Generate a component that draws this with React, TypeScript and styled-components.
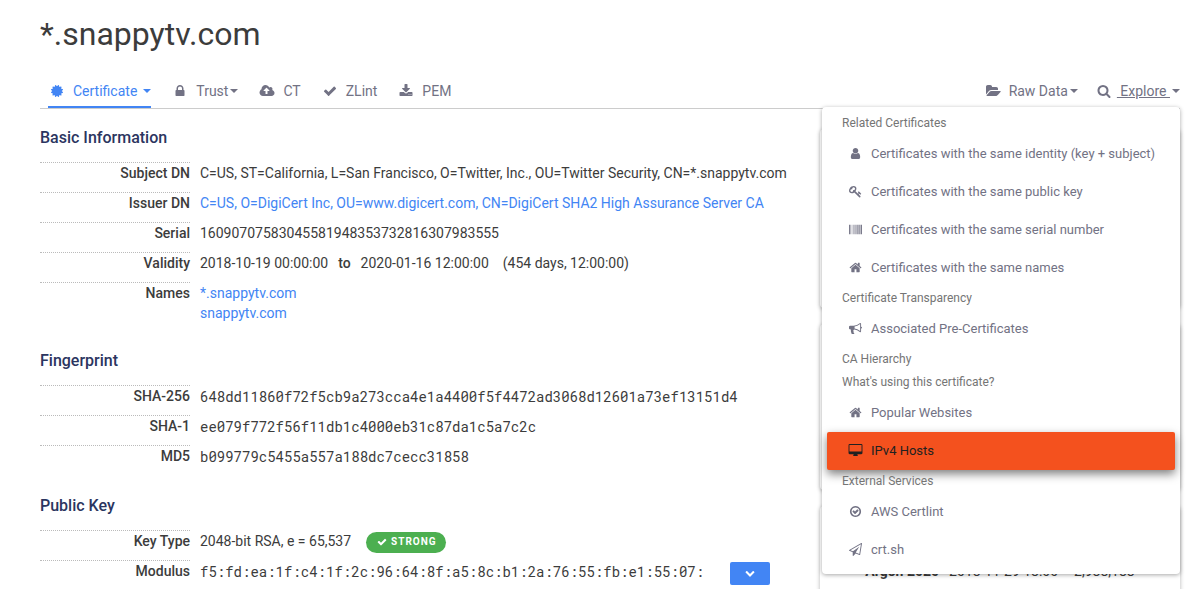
import React from "react";
import styled, { createGlobalStyle, css } from "styled-components";

const GlobalStyle = createGlobalStyle`
  *, *::before, *::after { box-sizing: border-box; }
  body {
    margin: 0;
    background: #fff;
    color: #3c3c3c;
    font-family: Roboto, "Liberation Sans", sans-serif;
    font-size: 14px;
    line-height: 20px;
  }
`;

const blue = "#4285f4";
const muted = "#727284";

/* ---------- icons ---------- */

const icons = {
  certificate:
    "M1504 896l138 135q30 28 20 70-12 41-52 51l-188 48 53 186q12 41-19 70-29 31-70 19l-186-53-48 188q-10 40-51 52-12 2-19 2-31 0-51-22l-135-138-135 138q-28 30-70 20-41-11-51-52l-48-188-186 53q-41 12-70-19-31-29-19-70l53-186-188-48q-40-10-52-51-10-42 20-70l138-135-138-135q-30-28-20-70 12-41 52-51l188-48-53-186q-12-41 19-70 29-31 70-19l186 53 48-188q10-41 51-51 41-12 70 19l135 139 135-139q29-30 70-19 41 10 51 51l48 188 186-53q41-12 70 19 31 29 19 70l-53 186 188 48q40 10 52 51 10 42-20 70z",
  lock: "M640 768h512v-192q0-106-75-181t-181-75-181 75-75 181v192zm832 96v576q0 40-28 68t-68 28h-960q-40 0-68-28t-28-68v-576q0-40 28-68t68-28h32v-192q0-184 132-316t316-132 316 132 132 316v192h32q40 0 68 28t28 68z",
  cloudUpload:
    "M1216 864q0-14-9-23l-352-352q-9-9-23-9t-23 9l-351 351q-10 12-10 24 0 14 9 23t23 9h224v352q0 13 9.500 22.500t22.500 9.500h192q13 0 22.500-9.500t9.500-22.500v-352h224q13 0 22.500-9.500t9.500-22.500zm640 288q0 159-112.500 271.500t-271.500 112.500h-1088q-185 0-316.500-131.500t-131.500-316.500q0-130 70-240t188-165q-2-30-2-43 0-212 150-362t362-150q156 0 285.500 87t188.500 231q71-62 166-62 106 0 181 75t75 181q0 76-41 138 130 31 213.500 135.500t83.500 238.500z",
  check:
    "M1671 566q0 40-28 68l-724 724-136 136q-28 28-68 28t-68-28l-136-136-362-362q-28-28-28-68t28-68l136-136q28-28 68-28t68 28l294 295 656-657q28-28 68-28t68 28l136 136q28 28 28 68z",
  download:
    "M1344 1344q0-26-19-45t-45-19-45 19-19 45 19 45 45 19 45-19 19-45zm256 0q0-26-19-45t-45-19-45 19-19 45 19 45 45 19 45-19 19-45zm128-224v320q0 40-28 68t-68 28h-1472q-40 0-68-28t-28-68v-320q0-40 28-68t68-28h465l135 136q58 56 136 56t136-56l136-136h464q40 0 68 28t28 68zm-325-569q17 41-14 70l-448 448q-18 19-45 19t-45-19l-448-448q-31-29-14-70 17-39 59-39h256v-448q0-26 19-45t45-19h256q26 0 45 19t19 45v448h256q42 0 59 39z",
  folderOpen:
    "M1879 952q0 31-31 66l-336 396q-43 51-120.500 86.500t-143.500 35.500h-1088q-34 0-60.500-13t-26.500-43q0-31 31-66l336-396q43-51 120.500-86.500t143.500-35.500h1088q34 0 60.500 13t26.500 43zm-343-344v160h-832q-94 0-197 47.500t-164 119.500l-337 396-5 6q0-4-.5-12.500t-.5-12.500v-960q0-92 66-158t158-66h320q92 0 158 66t66 158v32h544q92 0 158 66t66 158z",
  search:
    "M1216 832q0-185-131.500-316.500t-316.500-131.500-316.500 131.500-131.500 316.500 131.500 316.500 316.500 131.500 316.500-131.500 131.500-316.500zm512 832q0 52-38 90t-90 38q-54 0-90-38l-343-342q-179 124-399 124-143 0-273.500-55.500t-225-150-150-225-55.500-273.500 55.500-273.500 150-225 225-150 273.500-55.500 273.500 55.500 225 150 150 225 55.500 273.500q0 220-124 399l343 343q37 37 37 90z",
  user: "M1536 1399q0 109-62.500 187t-150.500 78h-854q-88 0-150.500-78t-62.500-187q0-85 8.500-160.500t31.500-152 58.500-131 94-89 134.500-34.500q131 128 313 128t313-128q76 0 134.500 34.500t94 89 58.500 131 31.500 152 8.500 160.500zm-256-887q0 159-112.500 271.500t-271.500 112.500-271.500-112.500-112.500-271.500 112.500-271.500 271.500-112.500 271.500 112.500 112.500 271.500z",
  key: "M832 512q0-80-56-136t-136-56-136 56-56 136q0 42 19 83-41-19-83-19-80 0-136 56t-56 136 56 136 136 56 136-56 56-136q0-42-19-83 41 19 83 19 80 0 136-56t56-136zm851 704q0 17-49 66t-66 49q-9 0-28.500-16t-36.500-33-38.500-40-24.500-26l-96 96 220 220q28 28 28 68 0 42-39 81t-81 39q-40 0-68-28l-671-671q-176 131-365 131-163 0-265.500-102.500t-102.500-265.500q0-160 95-313t248-248 313-95q163 0 265.500 102.500t102.500 265.500q0 189-131 365l355 355 96-96q-3-3-26-24.500t-40-38.500-33-36.500-16-28.500q0-17 49-66t66-49q13 0 23 10 6 6 46 44.500t82 79.500 86.500 86 73 78 28.500 41z",
  barcode:
    "M0 256h128v1280h-128zM192 256h64v1280h-64zM384 256h64v1280h-64zM576 256h64v1280h-64zM768 256h128v1280h-128zM1024 256h64v1280h-64zM1152 256h128v1280h-128zM1344 256h128v1280h-128zM1536 256h64v1280h-64zM1664 256h128v1280h-128z",
  home: "M1472 992v480q0 26-19 45t-45 19h-384v-384h-256v384h-384q-26 0-45-19t-19-45v-480q0-1 .5-3t.5-3l575-474 575 474q1 2 1 6zm223-69l-62 74q-8 9-21 11h-3q-13 0-21-7l-692-577-692 577q-12 8-24 7-13-2-21-11l-62-74q-8-10-7-23.500t11-21.500l719-599q32-26 76-26t76 26l244 204v-195q0-14 9-23t23-9h192q14 0 23 9t9 23v408l219 182q10 8 11 21.500t-7 23.500z",
  bullhorn:
    "M1664 640q53 0 90.500 37.500t37.500 90.500-37.500 90.500-90.500 37.500v384q0 52-38 90t-90 38q-417-347-812-380-58 19-91 66t-31 100.500 40 92.500q-20 33-23 65.500t6 58 33.500 55 48 50 61.500 50.500q-29 58-111.500 83t-168.500 11.500-132-55.500q-7-23-29.500-87.500t-32-94.500-23-89-15-101 3.500-98.500 22-110.500h-122q-66 0-113-47t-47-113v-192q0-66 47-113t113-47h480q435 0 896-384 52 0 90 38t38 90v384zm-128 604v-954q-394 302-768 343v270q377 42 768 341z",
  desktop:
    "M1728 992v-832q0-13-9.500-22.500t-22.500-9.500h-1600q-13 0-22.500 9.500t-9.500 22.500v832q0 13 9.500 22.500t22.500 9.500h1600q13 0 22.500-9.500t9.500-22.500zm128-832v1088q0 66-47 113t-113 47h-544q0 37 16 77.500t32 71 16 43.500q0 26-19 45t-45 19h-512q-26 0-45-19t-19-45q0-14 16-44t32-70 16-78h-544q-66 0-113-47t-47-113v-1088q0-66 47-113t113-47h1600q66 0 113 47t47 113z",
  checkCircle:
    "M1299 813l-422 422q-19 19-45 19t-45-19l-294-294q-19-19-19-45t19-45l102-102q19-19 45-19t45 19l147 147 275-275q19-19 45-19t45 19l102 102q19 19 19 45t-19 45zm141 83q0-148-73-273t-198-198-273-73-273 73-198 198-73 273 73 273 198 198 273 73 273-73 198-198 73-273zm224 0q0 209-103 385.500t-279.500 279.500-385.500 103-385.500-103-279.500-279.500-103-385.500 103-385.500 279.500-279.500 385.500-103 385.500 103 279.500 279.500 103 385.500z",
  paperPlane:
    "M1764 11q33 24 27 64l-256 1536q-5 29-32 45-14 8-31 8-11 0-24-5l-527-215-298 327q-18 21-47 21-14 0-23-4-19-7-30-23.500t-11-36.500v-452l-472-193q-37-14-40-55-3-39 32-59l1664-960q35-21 68 2zm-342 1499l221-1323-1434 827 336 137 863-639-478 797z",
  chevronDown:
    "M1683 808l-742 741q-19 19-45 19t-45-19l-742-741q-19-19-19-45.500t19-45.500l166-165q19-19 45-19t45 19l531 531 531-531q19-19 45-19t45 19l166 165q19 19 19 45.500t-19 45.500z",
};

type IconName = keyof typeof icons;

const Glyph = styled.svg<{ $size: number }>`
  width: ${(p) => p.$size}px;
  height: ${(p) => p.$size}px;
  flex: none;
  fill: currentColor;
  overflow: visible;
`;

function Icon({ name, size = 14 }: { name: IconName; size?: number }) {
  return (
    <Glyph viewBox="0 0 1792 1792" $size={size} aria-hidden="true">
      <path d={icons[name]} />
    </Glyph>
  );
}

const IconSlot = styled.span<{ $width: number }>`
  display: inline-flex;
  justify-content: center;
  flex: none;
  width: ${(p) => p.$width}px;
`;

const Caret = styled.span<{ $spaced?: boolean }>`
  border: 4px solid transparent;
  border-top-color: currentColor;
  border-bottom: 0;
  margin-left: ${(p) => (p.$spaced ? 6 : 2)}px;
`;

/* ---------- page ---------- */

const Page = styled.div`
  padding: 14px 13px 0 40px;
`;

const Title = styled.h1`
  margin: 0;
  font-size: 32px;
  line-height: 40px;
  font-weight: 400;
  color: #3c3c3c;
`;

const Nav = styled.nav`
  display: flex;
  justify-content: space-between;
  margin-top: 20px;
  padding-left: 8px;
  border-bottom: 1px solid #ccc;
`;

const NavGroup = styled.div<{ $gap: number }>`
  display: flex;
  gap: ${(p) => p.$gap}px;
`;

const NavLink = styled.a<{ $active?: boolean }>`
  display: flex;
  align-items: center;
  height: 34px;
  padding-top: 2px;
  border-bottom: 2px solid ${(p) => (p.$active ? blue : "transparent")};
  color: ${(p) => (p.$active ? blue : muted)};
  text-decoration: none;
  white-space: nowrap;
`;

const NavLabel = styled.span<{ $hovered?: boolean }>`
  margin-left: ${(p) => (p.$hovered ? 4 : 7)}px;
  text-decoration: ${(p) => (p.$hovered ? "underline" : "none")};
`;

const Dropdown = styled.div`
  position: relative;
`;

const Menu = styled.div`
  position: absolute;
  top: 33px;
  right: 0;
  z-index: 1;
  width: 358px;
  padding: 5px;
  border-radius: 4px;
  background: #fff;
  box-shadow: 0 1px 4px rgba(0, 0, 0, 0.35);
`;

const MenuHeader = styled.div`
  padding: 0 15px;
  font-size: 12px;
  line-height: 23px;
  color: #757575;
`;

const MenuItem = styled.a<{ $highlighted?: boolean }>`
  display: flex;
  align-items: center;
  gap: 8px;
  height: 38px;
  padding: 0 10px 0 20px;
  border-radius: 2px;
  font-size: 13px;
  color: ${muted};
  text-decoration: none;
  white-space: nowrap;

  ${IconSlot} {
    padding-bottom: 2px;
  }

  ${(p) =>
    p.$highlighted &&
    css`
      background: #f4511e;
      color: #212121;
      box-shadow: 0 4px 10px rgba(0, 0, 0, 0.5);
    `}
`;

const Columns = styled.div`
  display: grid;
  grid-template-columns: minmax(0, 1fr) 360px;
`;

const Details = styled.main`
  display: flex;
  flex-direction: column;
  gap: 21px;
  padding-top: 19px;
`;

const SectionTitle = styled.h2`
  margin: 0 0 14px;
  font-size: 16px;
  line-height: 20px;
  font-weight: 500;
  color: #2b3560;
`;

const Facts = styled.table`
  width: 100%;
  border-collapse: separate;
  border-spacing: 0;
  font-size: 14px;

  th {
    width: 150px;
    padding: 0 0 9px;
    border-top: 1px dotted #bbb;
    font-weight: 500;
    text-align: right;
    vertical-align: top;
  }

  td {
    padding: 1px 0 7px 10px;
    vertical-align: top;
  }
`;

const Link = styled.a`
  color: ${blue};
  text-decoration: none;
`;

const NameList = styled.ul`
  margin: 0;
  padding: 0;
  list-style: none;
`;

const Code = styled.code`
  display: block;
  padding-top: 1px;
  font-family: "Roboto Mono", "Liberation Mono", monospace;
  font-size: 14px;
`;

const To = styled.b`
  margin: 0 10px;
  font-weight: 500;
`;

const Duration = styled.span`
  margin-left: 14px;
`;

const Inline = styled.div`
  display: flex;
  align-items: center;
  height: 20px;
`;

const Badge = styled.span`
  display: inline-flex;
  align-items: center;
  gap: 4px;
  height: 21px;
  margin: 2px 0 0 15px;
  padding: 0 9px 0 11px;
  border-radius: 11px;
  background: #4caf50;
  color: #fff;
  font-size: 10px;
  font-weight: 700;
  letter-spacing: 1px;
`;

const Toggle = styled.button`
  display: inline-flex;
  align-items: center;
  justify-content: center;
  width: 40px;
  height: 23px;
  margin: 4px 0 0 26px;
  padding: 0;
  border: 0;
  border-radius: 2px;
  background: ${blue};
  color: #fff;
`;

const Side = styled.aside`
  display: flex;
  flex-direction: column;
  gap: 16px;
  padding-top: 20px;
`;

const Card = styled.section<{ $height: number }>`
  min-height: ${(p) => p.$height}px;
  border-radius: 4px;
  background: #fff;
  box-shadow: 0 1px 4px rgba(0, 0, 0, 0.3);
`;

const Logs = styled.table`
  margin: 0 auto;
  padding-top: 55px;
  border-spacing: 0;

  th {
    padding: 0 10px 8px 0;
    font-weight: 700;
    text-align: right;
  }

  td {
    padding: 0 0 8px;
  }

  td + td {
    padding-left: 16px;
  }
`;

type MenuGroup = { title: string; items: { icon: IconName; label: string; highlighted?: boolean }[] };

const exploreMenu: MenuGroup[] = [
  {
    title: "Related Certificates",
    items: [
      { icon: "user", label: "Certificates with the same identity (key + subject)" },
      { icon: "key", label: "Certificates with the same public key" },
      { icon: "barcode", label: "Certificates with the same serial number" },
      { icon: "home", label: "Certificates with the same names" },
    ],
  },
  { title: "Certificate Transparency", items: [{ icon: "bullhorn", label: "Associated Pre-Certificates" }] },
  { title: "CA Hierarchy", items: [] },
  {
    title: "What's using this certificate?",
    items: [
      { icon: "home", label: "Popular Websites" },
      { icon: "desktop", label: "IPv4 Hosts", highlighted: true },
    ],
  },
  {
    title: "External Services",
    items: [
      { icon: "checkCircle", label: "AWS Certlint" },
      { icon: "paperPlane", label: "crt.sh" },
    ],
  },
];

function Tab(props: {
  icon: IconName;
  label: string;
  active?: boolean;
  hovered?: boolean;
  caret?: "tight" | "spaced";
}) {
  return (
    <NavLink href="#" $active={props.active}>
      <IconSlot $width={18}>
        <Icon name={props.icon} />
      </IconSlot>
      <NavLabel $hovered={props.hovered}>{props.label}</NavLabel>
      {props.caret && <Caret $spaced={props.caret === "spaced"} />}
    </NavLink>
  );
}

function ExploreMenu() {
  return (
    <Menu>
      {exploreMenu.map((group) => (
        <div key={group.title}>
          <MenuHeader>{group.title}</MenuHeader>
          {group.items.map((item) => (
            <MenuItem key={item.label} href="#" $highlighted={item.highlighted}>
              <IconSlot $width={16}>
                <Icon name={item.icon} size={13} />
              </IconSlot>
              {item.label}
            </MenuItem>
          ))}
        </div>
      ))}
    </Menu>
  );
}

function Fact({ label, children }: { label: string; children: React.ReactNode }) {
  return (
    <tr>
      <th scope="row">{label}</th>
      <td>{children}</td>
    </tr>
  );
}

function Section({ title, children }: { title: string; children: React.ReactNode }) {
  return (
    <section>
      <SectionTitle>{title}</SectionTitle>
      <Facts>
        <tbody>{children}</tbody>
      </Facts>
    </section>
  );
}

export default function App() {
  return (
    <Page>
      <GlobalStyle />
      <Title>*.snappytv.com</Title>
      <Nav>
        <NavGroup $gap={20}>
          <Tab icon="certificate" label="Certificate" active caret="spaced" />
          <Tab icon="lock" label="Trust" caret="tight" />
          <Tab icon="cloudUpload" label="CT" />
          <Tab icon="check" label="ZLint" />
          <Tab icon="download" label="PEM" />
        </NavGroup>
        <NavGroup $gap={17}>
          <Tab icon="folderOpen" label="Raw Data" caret="tight" />
          <Dropdown>
            <Tab icon="search" label={"\u00a0Explore\u00a0"} hovered caret="tight" />
            <ExploreMenu />
          </Dropdown>
        </NavGroup>
      </Nav>
      <Columns>
        <Details>
          <Section title="Basic Information">
            <Fact label="Subject DN">
              C=US, ST=California, L=San Francisco, O=Twitter, Inc., OU=Twitter Security, CN=*.snappytv.com
            </Fact>
            <Fact label="Issuer DN">
              <Link href="#">C=US, O=DigiCert Inc, OU=www.digicert.com, CN=DigiCert SHA2 High Assurance Server CA</Link>
            </Fact>
            <Fact label="Serial">16090707583045581948353732816307983555</Fact>
            <Fact label="Validity">
              2018-10-19 00:00:00<To>to</To>2020-01-16 12:00:00<Duration>(454 days, 12:00:00)</Duration>
            </Fact>
            <Fact label="Names">
              <NameList>
                <li>
                  <Link href="#">*.snappytv.com</Link>
                </li>
                <li>
                  <Link href="#">snappytv.com</Link>
                </li>
              </NameList>
            </Fact>
          </Section>
          <Section title="Fingerprint">
            <Fact label="SHA-256">
              <Code>648dd11860f72f5cb9a273cca4e1a4400f5f4472ad3068d12601a73ef13151d4</Code>
            </Fact>
            <Fact label="SHA-1">
              <Code>ee079f772f56f11db1c4000eb31c87da1c5a7c2c</Code>
            </Fact>
            <Fact label="MD5">
              <Code>b099779c5455a557a188dc7cecc31858</Code>
            </Fact>
          </Section>
          <Section title="Public Key">
            <Fact label="Key Type">
              <Inline>
                2048-bit RSA, e = 65,537
                <Badge>
                  <Icon name="check" size={10} />
                  STRONG
                </Badge>
              </Inline>
            </Fact>
            <Fact label="Modulus">
              <Inline>
                <Code>f5:fd:ea:1f:c4:1f:2c:96:64:8f:a5:8c:b1:2a:76:55:fb:e1:55:07:</Code>
                <Toggle type="button" aria-label="Show full modulus">
                  <Icon name="chevronDown" size={10} />
                </Toggle>
              </Inline>
            </Fact>
          </Section>
        </Details>
        <Side>
          <Card $height={179} />
          <Card $height={166} />
          <Card $height={120}>
            <Logs>
              <tbody>
                <tr>
                  <th scope="row">Argon 2020</th>
                  <td>2018-11-29 18:00</td>
                  <td>2,988,188</td>
                </tr>
              </tbody>
            </Logs>
          </Card>
        </Side>
      </Columns>
    </Page>
  );
}
